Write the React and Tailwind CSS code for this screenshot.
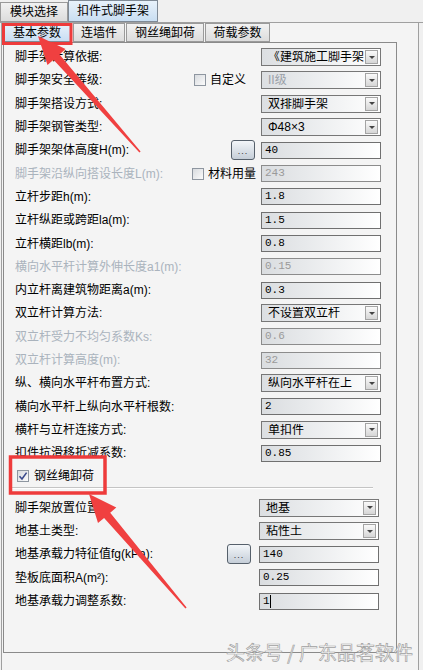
import React from 'react';

const CJK = "font-['Liberation_Sans','Noto_Sans_CJK_SC',sans-serif]";

const topRows = [
  { label: '脚手架计算依据:', select: '《建筑施工脚手架' },
  { label: '脚手架安全等级:', check: '自定义', checkCls: 'mr-[15px]', select: 'II级', dis: true },
  { label: '脚手架搭设方式:', select: '双排脚手架' },
  { label: '脚手架钢管类型:', select: 'Φ48×3' },
  { label: '脚手架架体高度H(m):', dots: 'mr-[6px]', input: '40' },
  { label: '脚手架沿纵向搭设长度L(m):', labelDis: true, check: '材料用量', checkCls: 'mr-[5px]', input: '243', dis: true },
  { label: '立杆步距h(m):', input: '1.8' },
  { label: '立杆纵距或跨距la(m):', input: '1.5' },
  { label: '立杆横距lb(m):', input: '0.8' },
  { label: '横向水平杆计算外伸长度a1(m):', labelDis: true, input: '0.15', dis: true },
  { label: '内立杆离建筑物距离a(m):', input: '0.3' },
  { label: '双立杆计算方法:', select: '不设置双立杆' },
  { label: '双立杆受力不均匀系数Ks:', labelDis: true, input: '0.6', dis: true },
  { label: '双立杆计算高度(m):', labelDis: true, input: '32', dis: true },
  { label: '纵、横向水平杆布置方式:', select: '纵向水平杆在上' },
  { label: '横向水平杆上纵向水平杆根数:', input: '2' },
  { label: '横杆与立杆连接方式:', select: '单扣件' },
  { label: '扣件抗滑移折减系数:', input: '0.85' },
];

const bottomRows = [
  { label: '脚手架放置位置:', select: '地基' },
  { label: '地基土类型:', select: '粘性土' },
  { label: '地基承载力特征值fg(kPa):', dots: 'mr-[8px]', input: '140' },
  { label: '垫板底面积A(m²):', input: '0.25' },
  { label: '地基承载力调整系数:', input: '1', caret: true },
];

const Checkbox = ({ checked }) => (
  <div className="w-[12px] h-[12px] border border-[#8e96a0] bg-linear-to-br from-[#d8dbdf] to-[#fbfbfb] flex items-center justify-center">
    {checked && (
      <svg width="10" height="10" viewBox="0 0 10 10">
        <path d="M1.5 5.2 L4 8 L8.6 1.6" fill="none" stroke="#3a4a8c" strokeWidth="1.6" />
      </svg>
    )}
  </div>
);

const Select = ({ value, dis, bottom }) => (
  <div
    className={
      bottom
        ? 'flex items-center h-[18px] w-[120px] mr-[17px] border border-[#777] bg-linear-to-r from-[#dcdfe2] to-white pl-[6px] pr-[2px] overflow-hidden'
        : 'flex items-center h-[18px] w-[120px] mr-[15px] border border-[#777] bg-linear-to-r from-[#dcdfe2] to-white pl-[6px] pr-[2px] overflow-hidden'
    }
  >
    <span className={dis ? 'text-[12px] leading-none whitespace-nowrap overflow-hidden text-[#9aa0a8]' : 'text-[12px] leading-none whitespace-nowrap overflow-hidden text-black'}>{value}</span>
    <div className="ml-auto shrink-0 w-[13px] h-[14px] border border-[#a4a4a4] bg-linear-to-b from-[#fafafa] to-[#d6d6d6] flex items-center justify-center">
      <div className="w-0 h-0 border-l-[3px] border-r-[3px] border-t-[3px] border-l-transparent border-r-transparent border-t-[#444]" />
    </div>
  </div>
);

const Input = ({ value, dis, bottom, caret }) => (
  <div
    className={
      bottom
        ? 'flex items-center h-[17px] w-[120px] mr-[17px] border border-[#707070] bg-linear-to-r from-[#dadde0] to-white pl-[3px]'
        : dis
        ? 'flex items-center h-[17px] w-[120px] mr-[15px] border border-[#8c8c8c] bg-linear-to-r from-[#dadde0] to-white pl-[3px]'
        : 'flex items-center h-[17px] w-[120px] mr-[15px] border border-[#707070] bg-linear-to-r from-[#dadde0] to-white pl-[3px]'
    }
  >
    <span className={dis ? "font-['Liberation_Mono',monospace] text-[11px] leading-none text-[#9a9a9a]" : "font-['Liberation_Mono',monospace] text-[11px] leading-none text-black"}>
      {value}
    </span>
    {caret && <span className="w-px h-[13px] bg-black" />}
  </div>
);

const Dots = ({ cls }) => (
  <div className={cls + ' w-[24px] h-[20px] rounded-[3px] border border-[#56606b] bg-linear-to-b from-[#f3f6f9] to-[#c5ced8] flex items-end justify-center pb-[3px]'}>
    <span className="text-[9px] leading-none tracking-[1px] text-[#333]">...</span>
  </div>
);

const Row = ({ r, bottom }) => (
  <div className="h-[23.3px] flex items-center pl-[11px]">
    <span className={r.labelDis ? 'flex-1 text-[12px] text-[#aab3bd] whitespace-nowrap' : 'flex-1 text-[12px] text-black whitespace-nowrap'}>{r.label}</span>
    {r.check && (
      <div className={r.checkCls + ' flex items-center gap-[4px]'}>
        <Checkbox />
        <span className="text-[12px] text-black">{r.check}</span>
      </div>
    )}
    {r.dots && <Dots cls={r.dots} />}
    {r.select ? (
      <Select value={r.select} dis={r.dis} bottom={bottom} />
    ) : (
      <Input value={r.input} dis={r.dis} bottom={bottom} caret={r.caret} />
    )}
  </div>
);

const Tab = ({ children, active, cls }) => (
  <div
    className={
      active
        ? cls + ' flex items-center justify-center border border-[#7f8a96] bg-linear-to-b from-[#e8f2fb] to-[#c9def2] text-[12px] text-black'
        : cls + ' flex items-center justify-center border border-[#9a9a9a] bg-linear-to-b from-[#f2f2f2] to-[#dcdcdc] text-[12px] text-black'
    }
  >
    {children}
  </div>
);

function arrow(tx, ty, sx, sy) {
  const dx = tx - sx;
  const dy = ty - sy;
  const len = Math.hypot(dx, dy);
  const ux = dx / len;
  const uy = dy / len;
  const nx = -uy;
  const ny = ux;
  const head = 28;
  const hw = 12;
  const sw = 4;
  const tw = 0.8;
  const bx = tx - ux * head;
  const by = ty - uy * head;
  const p = [
    [tx, ty],
    [bx + nx * hw, by + ny * hw],
    [bx + nx * sw, by + ny * sw],
    [sx + nx * tw, sy + ny * tw],
    [sx - nx * tw, sy - ny * tw],
    [bx - nx * sw, by - ny * sw],
    [bx - nx * hw, by - ny * hw],
  ];
  return p.map((q) => q[0].toFixed(1) + ',' + q[1].toFixed(1)).join(' ');
}

export default function App() {
  return (
    <div className={CJK + ' relative w-[423px] h-[670px] overflow-hidden bg-[#f0f0f0]'}>
      {/* module tabs */}
      <div className="h-[23px] flex items-end border-b border-[#a0a0a0]">
        <Tab cls="w-[68px] h-[20px]">模块选择</Tab>
        <Tab active cls="w-[90px] h-[22px]">扣件式脚手架</Tab>
      </div>

      <div className="ml-[1px] w-[418px] h-[647px] border-l border-r border-[#a0a0a0] bg-[#f4f4f4] pl-[1px]">
        {/* parameter tabs */}
        <div className="h-[19px] flex items-end">
          <Tab active cls="w-[68px] h-[19px]">基本参数</Tab>
          <Tab cls="w-[52px] h-[19px] ml-[2px]">连墙件</Tab>
          <Tab cls="w-[78px] h-[19px] ml-[1px]">钢丝绳卸荷</Tab>
          <Tab cls="w-[65px] h-[19px] ml-[1px]">荷载参数</Tab>
        </div>

        <div className="w-[394px] h-[611px] border border-[#8a8a8a] bg-[#f4f4f4] pt-[2.5px]">
          {topRows.map((r) => (
            <Row key={r.label} r={r} />
          ))}
          <div className="h-[22px] flex items-center pl-[13px] gap-[5px]">
            <Checkbox checked />
            <span className="text-[12px] text-black">钢丝绳卸荷</span>
          </div>
          <div className="ml-[8px] w-[361px] h-px bg-[#c4c4c4]" />
          <div className="ml-[8px] w-[361px] h-px bg-white" />
          <div className="h-[7.4px]" />
          {bottomRows.map((r) => (
            <Row key={r.label} r={r} bottom />
          ))}
        </div>
      </div>

      {/* annotations */}
      <svg className="absolute inset-0 pointer-events-none" width="423" height="670">
        <rect x="3.5" y="24.5" width="67.5" height="19" fill="none" stroke="#ee3b3b" strokeWidth="3" />
        <rect x="10.5" y="457" width="94.5" height="36" fill="none" stroke="#ee3b3b" strokeWidth="3.5" />
        <polygon points={arrow(38, 36, 140, 152)} fill="#f04040" />
        <polygon points={arrow(89, 494, 186, 608)} fill="#f04040" />
      </svg>

      <div className="absolute left-[226px] top-[642px] text-[19px] leading-none whitespace-nowrap text-white/90 [-webkit-text-stroke:0.7px_#a0a0a0] font-['Noto_Sans_CJK_SC',sans-serif]">
        头条号 / 广东品茗软件
      </div>
    </div>
  );
}
